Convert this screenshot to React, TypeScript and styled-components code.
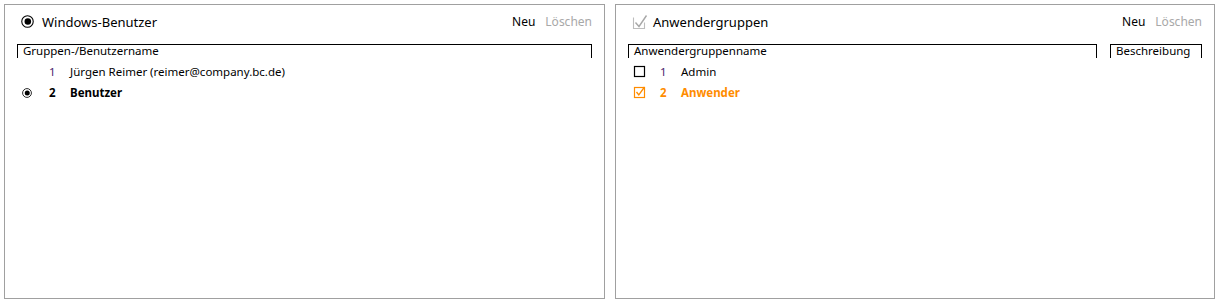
import React from 'react'
import styled, { createGlobalStyle } from 'styled-components'

const GlobalStyle = createGlobalStyle`
  html, body {
    margin: 0;
    padding: 0;
    background: #fff;
  }
  body {
    font-family: "Noto Sans", "Open Sans", sans-serif;
    font-size: 12px;
    color: #000;
  }
`

const Page = styled.div`
  display: flex;
  gap: 10px;
  padding: 4px;
  width: 1219px;
  height: 303px;
  box-sizing: border-box;
`

const Panel = styled.section<{ $width: number }>`
  width: ${p => p.$width}px;
  height: 295px;
  box-sizing: border-box;
  border: 1px solid #a0a0a0;
  display: flex;
  flex-direction: column;
  padding: 0 12px;
`

const Header = styled.div`
  display: flex;
  align-items: center;
  height: 33px;
  padding-left: 4px;
`

const Title = styled.h2<{ $gap: number }>`
  margin: 0 0 0 ${p => p.$gap}px;
  font-size: 13px;
  font-weight: normal;
  flex: 1;
`

const Action = styled.span<{ $disabled?: boolean }>`
  color: ${p => (p.$disabled ? '#a8a8a8' : '#000')};
  margin-left: 10px;
  font-size: 12px;
`

const Columns = styled.div`
  display: flex;
  gap: 13px;
  margin-top: 6px;
`

const Column = styled.div<{ $width?: number }>`
  flex: ${p => (p.$width ? `0 0 ${p.$width}px` : '1')};
  height: 14px;
  box-sizing: border-box;
  border: 1px solid #000;
  border-bottom: none;
  padding-left: 5px;
  font-size: 11.5px;
  line-height: 12px;
  white-space: nowrap;
`

const Rows = styled.div`
  display: flex;
  flex-direction: column;
  margin-top: 3px;
`

const Row = styled.div<{ $active?: boolean }>`
  display: flex;
  align-items: center;
  height: 21px;
  font-size: 11.5px;
  font-weight: ${p => (p.$active ? 'bold' : 'normal')};
`

const Marker = styled.span`
  width: 32px;
  display: flex;
  align-items: center;
  padding-left: 5px;
  box-sizing: border-box;
`

const Num = styled.span<{ $color?: string }>`
  width: 21px;
  color: ${p => p.$color || '#000'};
`

const Name = styled.span<{ $color?: string }>`
  color: ${p => p.$color || '#000'};
`

const RadioIcon = ({ size }: { size: number }) => (
  <svg width={size} height={size} viewBox="0 0 12 12">
    <circle cx="6" cy="6" r="5.3" fill="#fff" stroke="#000" strokeWidth="1" />
    <circle cx="6.3" cy="6" r="3" fill="#000" />
  </svg>
)

const CheckIcon = ({ color }: { color: string }) => (
  <svg width="13" height="13" viewBox="0 0 13 13">
    <rect x="1.5" y="1.5" width="10" height="10" fill="none" stroke={color} strokeWidth="1.2" />
    <path d="M3.5 6 L5.8 9 L11.5 1" fill="none" stroke={color} strokeWidth="1.3" />
  </svg>
)

const BoxIcon = () => (
  <svg width="13" height="13" viewBox="0 0 13 13">
    <rect x="1.5" y="1.5" width="10" height="10" fill="none" stroke="#000" strokeWidth="1.2" />
  </svg>
)

const GreyCheck = () => (
  <svg width="16" height="16" viewBox="0 0 16 16">
    <path d="M1.5 3.5 V14.5 H12.5 V8.5" fill="none" stroke="#bdbdbd" strokeWidth="1.1" />
    <path d="M3.5 8.5 L7 12.5 L14.5 1.5" fill="none" stroke="#a8a8a8" strokeWidth="1.4" />
  </svg>
)

const ORANGE = '#ff8c00'
const PURPLE = '#4b1e6e'

export default function App() {
  return (
    <>
      <GlobalStyle />
      <Page>
        <Panel $width={601}>
          <Header>
            <RadioIcon size={13} />
            <Title $gap={8}>Windows-Benutzer</Title>
            <Action>Neu</Action>
            <Action $disabled>Löschen</Action>
          </Header>
          <Columns>
            <Column>Gruppen-/Benutzername</Column>
          </Columns>
          <Rows>
            <Row>
              <Marker />
              <Num $color={PURPLE}>1</Num>
              <Name>Jürgen Reimer (reimer@company.bc.de)</Name>
            </Row>
            <Row $active>
              <Marker>
                <RadioIcon size={10} />
              </Marker>
              <Num>2</Num>
              <Name>Benutzer</Name>
            </Row>
          </Rows>
        </Panel>
        <Panel $width={600}>
          <Header>
            <GreyCheck />
            <Title $gap={5}>Anwendergruppen</Title>
            <Action>Neu</Action>
            <Action $disabled>Löschen</Action>
          </Header>
          <Columns>
            <Column>Anwendergruppenname</Column>
            <Column $width={92}>Beschreibung</Column>
          </Columns>
          <Rows>
            <Row>
              <Marker>
                <BoxIcon />
              </Marker>
              <Num $color={PURPLE}>1</Num>
              <Name>Admin</Name>
            </Row>
            <Row $active>
              <Marker>
                <CheckIcon color={ORANGE} />
              </Marker>
              <Num $color={ORANGE}>2</Num>
              <Name $color={ORANGE}>Anwender</Name>
            </Row>
          </Rows>
        </Panel>
      </Page>
    </>
  )
}
